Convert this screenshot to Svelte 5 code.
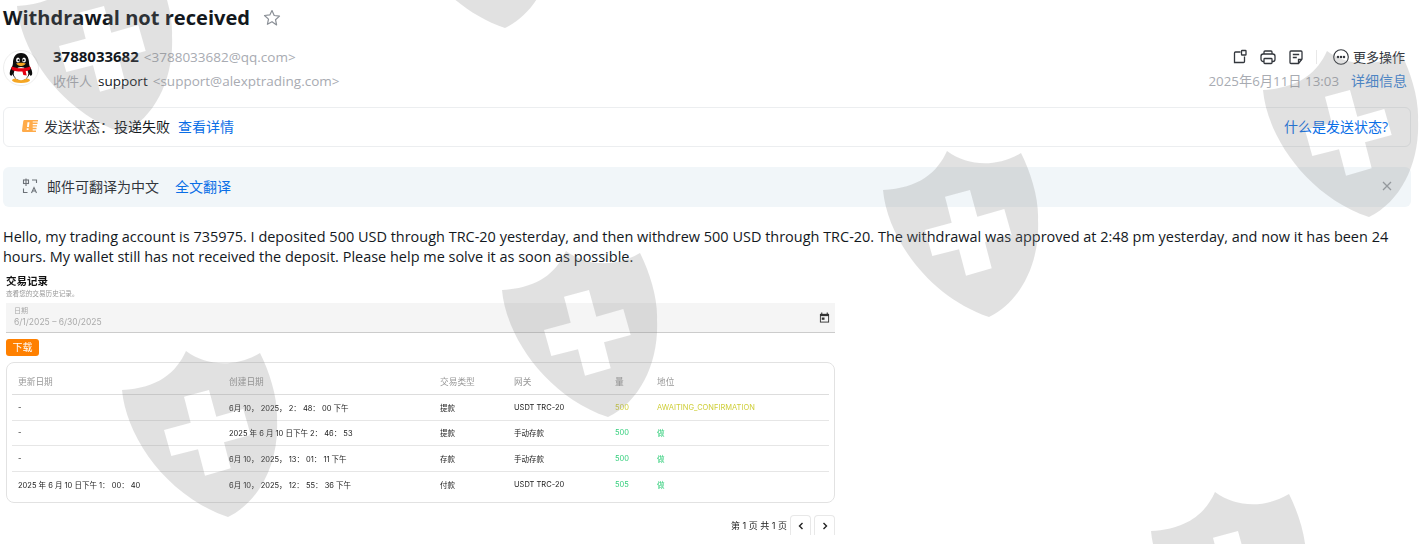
<script>
  const rows = [
    { updated: '-', created: '6月 10， 2025， 2： 48： 00 下午', type: '提款', gateway: 'USDT TRC-20', amount: '500', status: 'AWAITING_CONFIRMATION', pending: true },
    { updated: '-', created: '2025 年 6 月 10 日下午 2： 46： 53', type: '提款', gateway: '手动存款', amount: '500', status: '做', pending: false },
    { updated: '-', created: '6月 10， 2025， 13： 01： 11 下午', type: '存款', gateway: '手动存款', amount: '500', status: '做', pending: false },
    { updated: '2025 年 6 月 10 日下午 1： 00： 40', created: '6月 10， 2025， 12： 55： 36 下午', type: '付款', gateway: 'USDT TRC-20', amount: '505', status: '做', pending: false }
  ];
  const shields = [
    [81, -33], [463, -138], [186, 351], [566, 251], [947, 151], [1327, 51], [1215, 492]
  ];
</script>

<div class="page">
  <header class="title-row">
    <h1>Withdrawal not received</h1>
    <svg class="star" viewBox="0 0 18 18" width="18" height="18"><path d="M9 1.600l2.200 4.900 5.300.6-4 3.600 1.100 5.200L9 12.700l-4.600 2.600 1.100-5.200-4-3.600 5.300-.6z" fill="none" stroke="#8a8f96" stroke-width="1.200" stroke-linejoin="round"/></svg>
  </header>

  <section class="meta">
    <div class="avatar">
      <svg viewBox="0 0 36 36" width="34" height="34">
        <ellipse cx="18" cy="31" rx="9.500" ry="2.800" fill="#f5a623"/>
        <path d="M18 2c-6 0-8.500 5-8.500 10.500 0 2-.5 3.500-2 6-1.500 2.800-2 6.500-.5 7.500 1 .5 1.500-.5 2-1.500 1 3 4 6 9 6s8-3 9-6c.5 1 1 2 2 1.500 1.500-1 1-4.700-.5-7.500-1.500-2.500-2-4-2-6C26.500 7 24 2 18 2z" fill="#0d0d0d"/>
        <ellipse cx="18" cy="24" rx="7.800" ry="7" fill="#fff"/>
        <ellipse cx="14.800" cy="9.500" rx="2" ry="2.700" fill="#fff"/>
        <ellipse cx="21.200" cy="9.500" rx="2" ry="2.700" fill="#fff"/>
        <circle cx="15.300" cy="9.800" r="1.100" fill="#000"/>
        <circle cx="20.700" cy="9.800" r="1.100" fill="#000"/>
        <path d="M13 13.200c2-1 8-1 10 0 .5.500-3 2.800-5 2.800s-5.500-2.300-5-2.800z" fill="#f5a623"/>
        <path d="M8.500 16.500c5.500 2.500 13.500 2.500 19 0 1 1 1 3-.5 3.700l-4 1.300 1 4.500-3.500-.7-1-3.600c-3 .3-7 0-10.500-1.200-1.500-.7-1.500-3-.5-4z" fill="#e60012"/>
      </svg>
    </div>
    <div class="people">
      <div class="from"><strong>3788033682</strong><span class="addr">&lt;3788033682@qq.com&gt;</span></div>
      <div class="to"><span class="lbl">收件人</span><span class="name">support</span><span class="addr">&lt;support@alexptrading.com&gt;</span></div>
    </div>
    <div class="actions">
      <div class="tools">
        <svg viewBox="0 0 16 16" width="16" height="16" fill="none" stroke="#33373d" stroke-width="1.300"><path d="M8.500 3H3.500a1 1 0 0 0-1 1v9.500h9a1 1 0 0 0 1-1V7.500"/><rect x="9.500" y="1.500" width="4.500" height="4.500" rx=".6"/></svg>
        <svg viewBox="0 0 16 16" width="16" height="16" fill="none" stroke="#33373d" stroke-width="1.300"><path d="M4 5V3a1 1 0 0 1 1-1h6a1 1 0 0 1 1 1v2"/><rect x="1" y="5" width="14" height="7.500" rx="2.200"/><rect x="4" y="9.500" width="8" height="5" rx=".8" fill="#fff"/></svg>
        <svg viewBox="0 0 16 16" width="16" height="16" fill="none" stroke="#33373d" stroke-width="1.300"><path d="M14 10V3a1 1 0 0 0-1-1H3a1 1 0 0 0-1 1v10.500a1 1 0 0 0 1 1h7.500z"/><path d="M4.800 5.500h6.400M4.800 8.500h4M10.500 14v-3.500H14"/></svg>
        <span class="sep"></span>
        <span class="more">
          <svg viewBox="0 0 16 16" width="16" height="16" fill="none" stroke="#33373d" stroke-width="1.100"><circle cx="8" cy="8" r="7.300"/><circle cx="5" cy="8" r=".7" fill="#33373d"/><circle cx="8" cy="8" r=".7" fill="#33373d"/><circle cx="11" cy="8" r=".7" fill="#33373d"/></svg>
          更多操作
        </span>
      </div>
      <div class="date"><span>2025年6月11日 13:03</span><a href="#d">详细信息</a></div>
    </div>
  </section>

  <section class="status">
    <div class="status-l">
      <svg viewBox="0 0 16 12" width="16" height="12"><path d="M2.500 0h8.200v12H1.200A1.200 1.200 0 0 1 0 10.600L1.300 1A1.200 1.200 0 0 1 2.500 0z" fill="#ffab4a"/><path d="M10 0h6v1.400h-6zM10 2.600h5.500V4H10zM10 5.200h5v1.400h-5zM10 7.800h4.500v1.400H10zM10 10.400h4V12h-4z" fill="#ffab4a"/><path d="M5.500 2.200h2l-.6 4.800H5zM4.700 8.300h1.900v1.700H4.700z" fill="#fff"/></svg>
      <span class="k">发送状态：</span><span class="v">投递失败</span><a href="#s">查看详情</a>
    </div>
    <a class="what" href="#w">什么是发送状态?</a>
  </section>

  <section class="translate">
    <svg viewBox="0 0 16 16" width="16" height="16" fill="none" stroke="#6d7278" stroke-width="1.100"><rect x="1.500" y="2" width="5" height="3.500"/><path d="M4 .5v7.500M10 2h4.500v3M1.500 10.500v4h4"/><path d="M9.500 15l2.500-5.500 2.500 5.500M10.500 13h3"/></svg>
    <span class="tt">邮件可翻译为中文</span><a href="#t">全文翻译</a>
    <svg class="x" viewBox="0 0 10 10" width="10" height="10" fill="none" stroke="#9a9fa5" stroke-width="1.300"><path d="M1 1l8 8M9 1L1 9"/></svg>
  </section>

  <p class="body">Hello, my trading account is 735975. I deposited 500 USD through TRC-20 yesterday, and then withdrew 500 USD through TRC-20. The withdrawal was approved at 2:48 pm yesterday, and now it has been 24 hours. My wallet still has not received the deposit. Please help me solve it as soon as possible.</p>

  <section class="shot">
    <div class="shot-h">交易记录</div>
    <div class="shot-s">查看您的交易历史记录。</div>
    <div class="range">
      <div><div class="range-l">日期</div><div class="range-v">6/1/2025 – 6/30/2025</div></div>
      <svg viewBox="0 0 12 12" width="11" height="11"><path d="M1 2h10v9.500H1z" fill="#333"/><path d="M2 4.500h8v6H2z" fill="#f5f5f5"/><path d="M3 .5v2M9 .5v2" stroke="#333" stroke-width="1.200"/><rect x="3" y="6" width="3" height="2.500" fill="#333"/></svg>
    </div>
    <div class="dl">下载</div>
    <div class="card">
      <div class="grid head">
        <span>更新日期</span><span>创建日期</span><span>交易类型</span><span>网关</span><span>量</span><span>地位</span>
      </div>
      {#each rows as r}
        <div class="grid row">
          <span>{r.updated}</span><span>{r.created}</span><span class="ty">{r.type}</span><span>{r.gateway}</span>
          <span class={r.pending ? 'amber' : 'green'}>{r.amount}</span>
          <span class={r.pending ? 'amber' : 'green'}>{r.status}</span>
        </div>
      {/each}
    </div>
    <div class="pager">
      <span class="pt">第 1 页 共 1 页</span>
      <span class="pg"><svg viewBox="0 0 8 8" width="8" height="8" fill="none" stroke="#222" stroke-width="1.400"><path d="M5.500 1L2.500 4l3 3"/></svg></span>
      <span class="pg"><svg viewBox="0 0 8 8" width="8" height="8" fill="none" stroke="#222" stroke-width="1.400"><path d="M2.500 1l3 3-3 3"/></svg></span>
    </div>
  </section>

  <svg class="wm" width="1419" height="544" viewBox="0 0 1419 544" aria-hidden="true">
    {#each shields as [x, y]}
      <path transform="translate({x} {y})" fill-rule="evenodd" d="M0 0C-10 22-28 37-64 39C-60 85-20 145 42 166C75 150 93 110 91 69C92 48 84 22 74 2C50 16 22 16 0 0ZM-2 45.700L23 39L30.300 65.700L57.300 58L64.700 84L38 91.300L44.700 117.300L19 124.700L12 98.300L-14.700 105L-22 79L4.700 71.700Z"/>
    {/each}
  </svg>
</div>

<style>
  :global(body) { margin: 0; background: #fff; }
  .page {
    position: relative;
    width: 1419px;
    height: 544px;
    overflow: hidden;
    font-family: "Open Sans", "Noto Sans CJK SC", sans-serif;
    color: #13181d;
    box-sizing: border-box;
    padding: 0 8px 0 3px;
  }
  a { color: #0a6ee6; text-decoration: none; }
  .title-row { display: flex; align-items: center; gap: 13px; height: 36px; }
  h1 { margin: 0; font-size: 20.100px; font-weight: 700; line-height: 36px; color: #13181d; }
  .meta { display: flex; height: 60px; margin-top: 9px; }
  .avatar { width: 36px; height: 36px; margin-top: 5px; border-radius: 50%; border: 1px solid #eee; display: flex; align-items: center; justify-content: center; box-sizing: border-box; }
  .people { margin: -1px 0 0 14px; font-size: 13.500px; line-height: 24px; }
  .from strong { font-weight: 700; font-size: 15px; color: #13181d; }
  .addr { color: #a8abb2; margin-left: 5px; }
  .lbl { color: #a8abb2; margin-right: 6px; font-size: 13px; }
  .name { color: #13181d; }
  .actions { margin-left: auto; display: flex; flex-direction: column; align-items: flex-end; font-size: 14px; line-height: 24px; }
  .tools { display: flex; align-items: center; gap: 12px; height: 24px; }
  .sep { width: 1px; height: 14px; background: #e8e8e8; margin-right: 4px; }
  .more { display: flex; align-items: center; gap: 4px; color: #33373d; margin-right: 6px; font-size: 13px; }
  .date { color: #a8abb2; display: flex; gap: 12px; margin-right: 4px; font-size: 13.300px; }
  .date a { color: #3d86d8; font-size: 14px; }
  .status { display: flex; align-items: center; justify-content: space-between; height: 40px; box-sizing: border-box; border: 1px solid #eceef0; border-radius: 6px; padding: 0 22px 2px 18px; font-size: 14px; margin-top: 2px; }
  .status-l { display: flex; align-items: center; }
  .k { margin-left: 6px; color: #33373d; }
  .v { color: #13181d; }
  .status-l a { margin-left: 8px; }
  .translate { display: flex; align-items: center; height: 40px; box-sizing: border-box; background: #f1f6f9; border-radius: 6px; padding: 0 19px 2px; margin-top: 20px; font-size: 14px; color: #33373d; }
  .tt { margin-left: 9px; }
  .translate a { margin-left: 16px; }
  .x { margin-left: auto; }
  .body { margin: 20px 0 0; font-size: 14.470px; line-height: 20px; color: #13181d; width: 1395px; }
  .shot { width: 829px; margin-left: 3px; margin-top: 9px; font-family: Inter, "Noto Sans CJK SC", sans-serif; font-size: 7.500px; color: #222; filter: blur(.25px); }
  .shot-h { font-size: 10.500px; font-weight: 700; line-height: 12px; color: #111; }
  .shot-s { font-size: 6.600px; line-height: 12px; color: #999; }
  .range { display: flex; align-items: center; justify-content: space-between; height: 30px; box-sizing: border-box; background: #f5f5f5; border-bottom: 1px solid #ccc; padding: 0 5px 0 8px; margin-top: 3px; }
  .range-l { font-size: 7px; line-height: 10px; color: #aaa; }
  .range-v { font-size: 8.500px; line-height: 13px; color: #aaa; }
  .dl { width: 33px; height: 17px; margin-top: 6px; background: #ff8000; border-radius: 3px; color: #fff; font-size: 10px; line-height: 17px; text-align: center; }
  .card { margin-top: 6px; height: 141px; box-sizing: border-box; border: 1px solid #e2e2e2; border-radius: 8px; padding: 6px 5px 0; }
  .grid { display: grid; grid-template-columns: 211px 211px 74px 101px 42px 1fr; padding: 0 6px; align-items: center; box-sizing: border-box; }
  .head { height: 26px; color: #999; border-bottom: 1px solid #ddd; font-size: 8.700px; }
  .row { height: 25.500px; border-bottom: 1px solid #e6e6e6; }
  .row:last-child { border-bottom: none; }
  .ty { color: #222; }
  .amber { color: #cfcf3a; }
  .green { color: #35cf7d; }
  .pager { display: flex; justify-content: flex-end; align-items: center; gap: 3px; margin-top: 12px; font-size: 9px; }
  .pg { width: 21px; height: 20px; display: flex; align-items: center; justify-content: center; border: 1px solid #e8e8e8; border-bottom: none; border-radius: 4px 4px 0 0; box-sizing: border-box; }
  .wm { position: absolute; left: 0; top: 0; pointer-events: none; }
  .wm path { fill: rgba(128, 128, 128, .24); }
</style>
